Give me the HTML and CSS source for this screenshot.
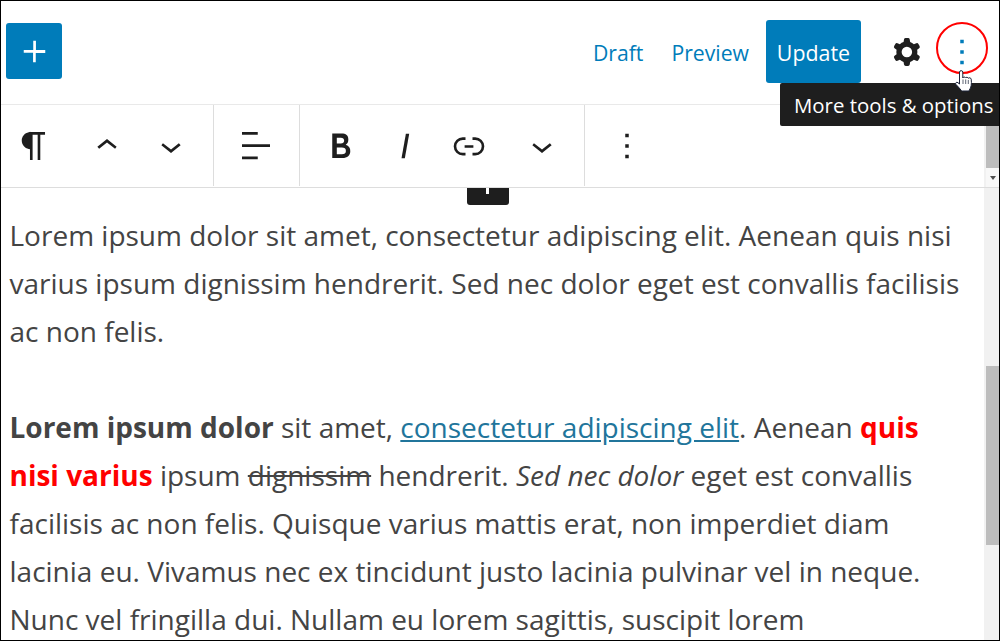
FILE: index.html
```html
<!DOCTYPE html>
<html lang="en">
<head>
<meta charset="utf-8">
<title>Editor</title>
<link rel="stylesheet" href="styles.css">
</head>
<body>
<div class="app">
  <header class="topbar">
    <button class="inserter"><svg class="ico-plus" viewBox="0 0 24 24"><path d="M18 11.2h-5.2V6h-1.5v5.2H6v1.5h5.2V18h1.5v-5.2H18z"/></svg></button>
    <div class="actions">
      <a class="textlink draft">Draft</a>
      <a class="textlink preview">Preview</a>
      <button class="update">Update</button>
      <span class="tool gear"><svg viewBox="0 0 24 24"><path fill-rule="evenodd" d="M10.289 4.836A1 1 0 0 1 11.275 4h1.306a1 1 0 0 1 .987.836l.244 1.466c.787.26 1.503.679 2.108 1.218l1.393-.522a1 1 0 0 1 1.216.437l.653 1.13a1 1 0 0 1-.23 1.273l-1.148.944a6.025 6.025 0 0 1 0 2.435l1.149.946a1 1 0 0 1 .23 1.272l-.653 1.13a1 1 0 0 1-1.216.437l-1.394-.522c-.605.54-1.32.958-2.108 1.218l-.244 1.466a1 1 0 0 1-.987.836h-1.306a1 1 0 0 1-.986-.836l-.244-1.466a5.995 5.995 0 0 1-2.108-1.218l-1.394.522a1 1 0 0 1-1.217-.436l-.653-1.131a1 1 0 0 1 .23-1.272l1.149-.946a6.026 6.026 0 0 1 0-2.435l-1.148-.944a1 1 0 0 1-.23-1.272l.653-1.131a1 1 0 0 1 1.217-.437l1.393.522a5.994 5.994 0 0 1 2.108-1.218l.244-1.466zM14.929 12a3 3 0 1 1-6 0 3 3 0 0 1 6 0z"/></svg></span>
      <span class="tool more"><svg viewBox="0 0 24 24"><path d="M13 19h-2v-2h2v2zm0-6h-2v-2h2v2zm0-6h-2V5h2v2z"/></svg></span>
    </div>
  </header>

  <nav class="toolbar">
    <div class="group g1">
      <span class="btn"><svg viewBox="0 0 24 24"><path d="M18.3 4H9.900v-.1l-.9.2c-2.300.4-4 2.400-4 4.800s1.700 4.400 4 4.800l.7.1V20h1.500V5.500h2.900V20h1.500V5.500h2.700V4z"/></svg></span>
      <span class="btn"><svg viewBox="0 0 24 24"><path d="M6.500 12.400L12 8l5.500 4.400-.9 1.200L12 10l-4.500 3.600-1-1.200z"/></svg></span>
      <span class="btn"><svg viewBox="0 0 24 24"><path d="M17.500 11.600L12 16l-5.500-4.400.9-1.200L12 14l4.500-3.600 1 1.200z"/></svg></span>
    </div>
    <div class="group g2">
      <span class="btn"><svg viewBox="0 0 24 24"><path d="M13 5.500H4V4h9v1.500Zm7 7H4V11h16v1.500Zm-7 7H4V18h9v1.500Z"/></svg></span>
    </div>
    <div class="group g3">
      <span class="btn"><svg viewBox="0 0 24 24"><path d="M14.700 11.300c1-.6 1.500-1.600 1.500-3 0-2.300-1.300-3.400-4-3.400H7v14h5.800c1.400 0 2.500-.3 3.300-1 .8-.7 1.200-1.700 1.200-2.900.1-1.900-.8-3.100-2.600-3.700zm-5.100-4h2.300c.6 0 1.100.1 1.400.4.300.3.5.7.5 1.200s-.2 1-.5 1.200c-.3.3-.8.4-1.400.4H9.600V7.300zm4.600 9c-.4.3-1 .4-1.700.4H9.600v-3.900h2.900c.7 0 1.300.2 1.700.5.4.3.6.8.6 1.500s-.2 1.200-.6 1.500z"/></svg></span>
      <span class="btn"><svg viewBox="0 0 24 24"><path d="M12.500 5L10 19h1.900l2.500-14z"/></svg></span>
      <span class="btn"><svg viewBox="0 0 24 24"><path d="M10 17.389H8.444A5.194 5.194 0 1 1 8.444 7H10v1.500H8.444a3.694 3.694 0 0 0 0 7.389H10v1.500ZM14 7h1.556a5.194 5.194 0 0 1 0 10.390H14v-1.500h1.556a3.694 3.694 0 0 0 0-7.390H14V7Zm-4.500 6h5v-1.500h-5V13Z"/></svg></span>
      <span class="btn chev"><svg viewBox="0 0 24 24"><path d="M17.500 11.600L12 16l-5.500-4.400.9-1.200L12 14l4.500-3.600 1 1.200z"/></svg></span>
    </div>
    <div class="group g4">
      <span class="btn"><svg viewBox="0 0 24 24"><path d="M13 19h-2v-2h2v2zm0-6h-2v-2h2v2zm0-6h-2V5h2v2z"/></svg></span>
    </div>
    <div class="toolbar-scroll">
      <div class="stub-thumb"></div>
      <div class="stub-arrow"><i class="tri"></i></div>
    </div>
  </nav>

  <div class="body">
    <main class="content">
      <div class="block-tab"><i class="block-tab-stem"></i></div>
      <p>Lorem ipsum dolor sit amet, consectetur adipiscing elit. Aenean quis nisi varius ipsum dignissim hendrerit. Sed nec dolor eget est convallis facilisis ac non felis.</p>
      <p><strong>Lorem ipsum dolor</strong> sit amet, <a class="inline-link">consectetur adipiscing elit</a>. Aenean <strong class="red">quis nisi varius</strong> ipsum <s>dignissim</s> hendrerit. <em>Sed nec dolor</em> eget est convallis facilisis ac non felis. Quisque varius mattis erat, non imperdiet diam lacinia eu. Vivamus nec ex tincidunt justo lacinia pulvinar vel in neque. Nunc vel fringilla dui. Nullam eu lorem sagittis, suscipit lorem</p>
    </main>
    <div class="scrollbar">
      <div class="track-top"></div>
      <div class="thumb"></div>
    </div>
  </div>

  <div class="tooltip">More tools &amp; options</div>
  <div class="ring"></div>
  <svg class="hand" viewBox="0 0 17 23"><path d="M4.500 2c0-1.800 3.300-1.800 3.300 0v6c.3-1.300 2.500-1.300 2.800 0 .3-1 2.400-1 2.700.3.400-.9 2.700-.7 2.900.9.300 2.200.3 4.500 0 6.300-.3 1.800-1 3.200-1.800 4.500-.3.600-.5 1-.9 1H7.300c-.5 0-.9-.3-1.200-.8C4.600 18.200 2.800 16.500 1 14.500c-1.100-1.400.5-3 2-1.800l1.500 1.300z" fill="#fff" stroke="#1a2238"/><path d="M8 9.500V14M10.700 9.500V14M13.300 10V14" stroke="#1a2238" stroke-width=".7" fill="none"/></svg>
</div>
</body>
</html>
```
FILE: styles.css
```css
* { box-sizing: border-box; }
html, body { margin: 0; padding: 0; }
body { font-family: "Open Sans", "Noto Sans", sans-serif; background: #fff; overflow: hidden; }
.app {
  position: relative;
  width: 1000px;
  height: 641px;
  border: 1px solid #000;
  display: flex;
  flex-direction: column;
  overflow: hidden;
  background: #fff;
}
button { font-family: inherit; border: 0; padding: 0; }
svg { display: block; }

.topbar {
  height: 104px;
  flex: none;
  display: flex;
  align-items: flex-start;
  justify-content: space-between;
  border-bottom: 1px solid #e9e9e9;
  padding: 19px 0 0 5px;
}
.inserter {
  width: 56px;
  height: 56px;
  margin-top: 3px;
  background: #007cba;
  border-radius: 3px;
  display: flex;
  align-items: center;
  justify-content: center;
}
.ico-plus { width: 43px; height: 43px; fill: #fff; }
.actions { display: flex; align-items: center; height: 63px; }
.textlink { color: #007cba; font-size: 21.2px; padding-top: 2px; }
.draft { margin-right: 28px; }
.preview { margin-right: 17px; }
.update {
  width: 95px;
  height: 63px;
  background: #007cba;
  color: #fff;
  font-size: 21.4px;
  padding-top: 2px;
  border-radius: 3px;
  margin-right: 25px;
}
.tool { width: 42px; height: 42px; display: block; }
.gear { fill: #1e1e1e; margin-right: 13px; }
.more { fill: #007cba; margin-right: 16px; }

.toolbar {
  height: 83px;
  flex: none;
  display: flex;
  border-bottom: 1px solid #ddd;
}
.group {
  display: flex;
  align-items: center;
  height: 81px;
  border-right: 1px solid #ddd;
}
.g1 { width: 213px; padding-left: 1px; }
.g1 .btn:first-child { margin-right: 9px; }
.g2 { width: 86px; justify-content: center; padding-right: 2px; }
.g3 { width: 285px; padding-left: 9px; }
.g3 .chev { margin-left: 9px; }
.g4 { border-right: 0; padding-left: 10px; }
.btn { width: 64px; height: 64px; display: flex; align-items: center; justify-content: center; }
.btn svg { width: 42px; height: 42px; fill: #1e1e1e; }

.toolbar-scroll {
  margin-left: auto;
  width: 15px;
  background: #f1f1f1;
  display: flex;
  flex-direction: column;
  align-items: flex-end;
}
.stub-thumb { width: 13px; height: 63px; background: #bdbdbd; flex: none; }
.stub-arrow {
  width: 13px;
  flex: 1;
  background: #f8f8f8;
  display: flex;
  align-items: center;
  justify-content: center;
}
.tri {
  width: 0;
  height: 0;
  border-left: 3px solid transparent;
  border-right: 3px solid transparent;
  border-top: 4px solid #505050;
}

.body { flex: 1; display: flex; min-height: 0; }
.content {
  flex: 1;
  min-width: 0;
  position: relative;
  padding: 23px 13px 0 8.5px;
  font-size: 28px;
  line-height: 48px;
  color: #444;
  overflow: hidden;
}
.content p { margin: 0 0 48px; }
.inline-link { color: #21759b; text-decoration: underline; }
.red { color: #f00; }
.block-tab {
  position: absolute;
  left: 466px;
  top: 0;
  width: 42px;
  height: 17px;
  background: #1e1e1e;
  border-radius: 0 0 3px 3px;
}
.block-tab-stem {
  position: absolute;
  left: 19px;
  top: 0;
  width: 3px;
  height: 6px;
  background: #fff;
}
.scrollbar {
  width: 15px;
  flex: none;
  background: #f1f1f1;
  display: flex;
  flex-direction: column;
  align-items: flex-end;
}
.track-top { height: 178px; flex: none; }
.thumb { width: 13px; height: 179px; background: #bdbdbd; flex: none; }

.tooltip {
  position: absolute;
  left: 779px;
  top: 82px;
  width: 220px;
  height: 43px;
  background: #1e1e1e;
  color: #fff;
  font-size: 20.4px;
  line-height: 45px;
  padding-left: 14px;
  border-radius: 2px 0 0 2px;
  white-space: nowrap;
  overflow: hidden;
}
.ring {
  position: absolute;
  left: 935px;
  top: 21px;
  width: 52px;
  height: 52px;
  border: 2px solid #f00;
  border-radius: 50%;
}
.hand { position: absolute; left: 954px; top: 69px; width: 17px; height: 23px; }
```
